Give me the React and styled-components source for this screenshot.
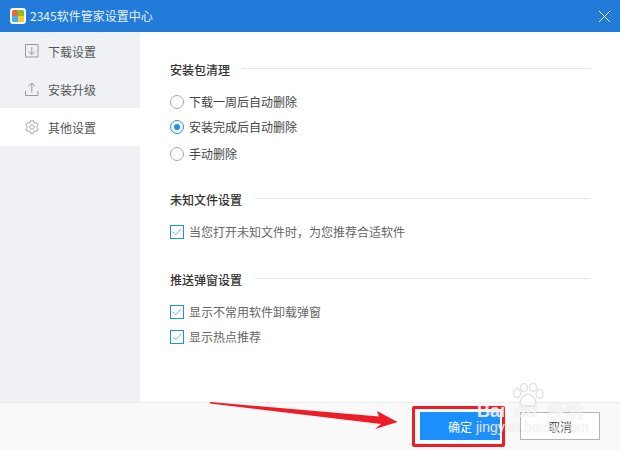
import React from "react"
import styled, { createGlobalStyle } from "styled-components"

const GlobalStyle = createGlobalStyle`
  html, body {
    margin: 0;
    padding: 0;
    background: #fff;
  }
  body {
    font-family: "Noto Sans CJK SC", "Liberation Sans", sans-serif;
    font-size: 12px;
  }
`

const Window = styled.div`
  position: relative;
  width: 620px;
  height: 450px;
  display: flex;
  flex-direction: column;
  overflow: hidden;
  background: #fff;
`

const TitleBar = styled.header`
  height: 32px;
  flex: none;
  display: flex;
  align-items: center;
  padding: 0 10px 0 10px;
  gap: 4px;
  background: #227bd8;
  color: #e6f2ff;
  font-size: 12px;
`

const Title = styled.span`
  flex: 1;
  line-height: 18px;
`

const Body = styled.div`
  flex: 1;
  display: flex;
  min-height: 0;
`

const Sidebar = styled.nav`
  width: 140px;
  flex: none;
  background: #eff1f5;
`

const NavItem = styled.div`
  height: 38px;
  display: flex;
  align-items: center;
  gap: 9px;
  padding-left: 25px;
  color: #555;
  background: ${(p) => (p.$active ? "#fff" : "transparent")};
`

const Content = styled.main`
  flex: 1;
  padding: 26px 30px 0;
`

const Section = styled.section`
  margin-bottom: ${(p) => p.$gap}px;
`

const Heading = styled.div`
  height: 20px;
  display: flex;
  align-items: center;
  gap: 12px;
  color: #333;
  font-weight: 500;
  margin-bottom: 17px;

  & > span {
    position: relative;
    top: 1px;
  }

  &::after {
    content: "";
    flex: 1;
    height: 1px;
    background: #e6e6e6;
  }
`

const Option = styled.div`
  height: ${(p) => p.$h || 25}px;
  display: flex;
  align-items: flex-start;
  gap: 5px;
  line-height: 14px;
  color: ${(p) => p.$color || "#666"};
`

const Radio = styled.span`
  box-sizing: border-box;
  width: 14px;
  height: 14px;
  flex: none;
  border-radius: 50%;
  border: 1px solid ${(p) => (p.$on ? "#1b8ffb" : "#a8a8a8")};
  display: flex;
  align-items: center;
  justify-content: center;

  &::after {
    content: "";
    display: ${(p) => (p.$on ? "block" : "none")};
    width: 6px;
    height: 6px;
    border-radius: 50%;
    background: #1b8ffb;
  }
`

const Check = styled.span`
  box-sizing: border-box;
  width: 14px;
  height: 14px;
  flex: none;
  border: 1px solid #1b8ffb;
  display: flex;
  align-items: center;
  justify-content: center;
`

const Footer = styled.footer`
  height: 48px;
  flex: none;
  box-sizing: border-box;
  border-top: 1px solid #ececec;
  background: #f9f9f9;
  display: flex;
  justify-content: flex-end;
  align-items: center;
  gap: 20px;
  padding: 0 20px 1px;
`

const Button = styled.button`
  box-sizing: border-box;
  width: 80px;
  height: 28px;
  margin: 0;
  padding: 0;
  font: inherit;
  border: 1px solid ${(p) => (p.$primary ? "#1b8ffb" : "#b4b4b4")};
  background: ${(p) => (p.$primary ? "#1b8ffb" : "#fff")};
  color: ${(p) => (p.$primary ? "#fff" : "#444")};
`

const Marker = styled.div`
  position: absolute;
  left: 412px;
  top: 406px;
  width: 93px;
  height: 41px;
  box-sizing: border-box;
  border: 3px solid #ee1c25;
  border-radius: 2px;
`

const Arrow = styled.svg`
  position: absolute;
  left: 205px;
  top: 395px;
`

const Watermark = styled.div`
  position: absolute;
  left: 476px;
  top: 380px;
  width: 144px;
  height: 58px;
  color: rgba(255, 255, 255, 0.75);
  text-shadow: 0 0 1px rgba(185, 185, 185, 0.55);
  pointer-events: none;
`

const WatermarkLatin = styled.span`
  position: absolute;
  left: ${(p) => p.$left}px;
  top: 20px;
  font: bold 18px "Liberation Sans", sans-serif;
  line-height: 22px;
  white-space: nowrap;
`

const WatermarkCn = styled.span`
  position: absolute;
  left: 71px;
  top: 19px;
  font: 18px "Noto Sans CJK SC", sans-serif;
  line-height: 22px;
  white-space: nowrap;
`

const WatermarkUrl = styled.div`
  position: absolute;
  left: 0;
  top: 39px;
  font: 14px "Liberation Sans", sans-serif;
  line-height: 16px;
  white-space: nowrap;
`

const Paw = styled.svg`
  position: absolute;
  left: 36px;
  top: 3px;
`

const Logo = () => (
  <svg width="16" height="16" viewBox="0 0 16 16">
    <rect x="0" y="0" width="16" height="16" rx="3" fill="#f4f8fc" />
    <path d="M2 3.500a1.500 1.500 0 0 1 1.500-1.500H8v6H2z" fill="#f0693a" />
    <path d="M8 2h4.500A1.500 1.500 0 0 1 14 3.500V8H8z" fill="#84c22a" />
    <path d="M2 8h6v6H3.500A1.500 1.500 0 0 1 2 12.500z" fill="#45aef2" />
    <path d="M8 8h6v4.500a1.500 1.500 0 0 1-1.500 1.500H8z" fill="#fbc52e" />
  </svg>
)

const CloseIcon = () => (
  <svg width="11" height="11" viewBox="0 0 11 11" fill="none" stroke="#fff" strokeWidth="1">
    <path d="M0 0l11 11M11 0L0 11" />
  </svg>
)

const DownloadIcon = () => (
  <svg width="14" height="14" viewBox="0 0 14 14" fill="none" stroke="#9a9a9a" strokeWidth="1">
    <path d="M0.500 0.500h12.500v12.500H0.500z" />
    <path d="M6.800 3v7.500M3.800 7.500l3 3 3-3" />
  </svg>
)

const UploadIcon = () => (
  <svg width="14" height="14" viewBox="0 0 14 14" fill="none" stroke="#9a9a9a" strokeWidth="1">
    <path d="M0.500 9v4.500h12.500V9" />
    <path d="M6.800 10.500V1M3.500 4.300l3.300-3.300 3.300 3.300" />
  </svg>
)

const GearIcon = () => (
  <svg width="14" height="14" viewBox="0 0 14 14" fill="none" stroke="#a5a5a5" strokeWidth="1">
    <path d="M5.600 0.700h2.800l.4 1.800 1.300.7 1.700-.6 1.400 2.500-1.300 1.200v1.400l1.300 1.200-1.400 2.500-1.700-.6-1.300.7-.4 1.800H5.600l-.4-1.800-1.300-.7-1.700.6-1.400-2.500 1.300-1.200V6.300L.8 5.100l1.400-2.500 1.700.6 1.300-.7z" />
    <circle cx="7" cy="7" r="2.200" />
  </svg>
)

const CheckMark = () => (
  <svg width="10" height="8" viewBox="0 0 10 8" fill="none" stroke="#6bb5f5" strokeWidth="1">
    <path d="M1 4l2.800 2.800L9 1" />
  </svg>
)

const AnnotationArrow = () => (
  <Arrow width="205" height="45">
    <path d="M5 7L174 21.500L172 16L192.500 27L170 34L176 29L5 8.500Z" fill="#ee1c25" />
  </Arrow>
)

const BaiduMark = () => (
  <Watermark>
    <Paw width="32" height="26" viewBox="0 0 32 26" fill="rgba(255,255,255,0.6)" stroke="rgba(215,215,215,0.7)" strokeWidth="1.500">
      <ellipse cx="5" cy="10" rx="3.500" ry="4.500" />
      <ellipse cx="12" cy="4.500" rx="3.500" ry="4" />
      <ellipse cx="21" cy="4.500" rx="3.500" ry="4" />
      <ellipse cx="27.500" cy="11" rx="3.500" ry="4.500" />
      <path d="M16 11c4 0 8 5 8 9 0 3-3 4-5 3-2-.5-4-.5-6 0-2 1-5 0-5-3 0-4 4-9 8-9z" />
    </Paw>
    <WatermarkLatin $left={1}>Bai</WatermarkLatin>
    <WatermarkLatin $left={39}>du</WatermarkLatin>
    <WatermarkCn>经验</WatermarkCn>
    <WatermarkUrl>jingyan.baidu.com</WatermarkUrl>
  </Watermark>
)

export default function App() {
  return (
    <>
      <GlobalStyle />
      <Window>
        <TitleBar>
          <Logo />
          <Title>2345软件管家设置中心</Title>
          <CloseIcon />
        </TitleBar>
        <Body>
          <Sidebar>
            <NavItem>
              <DownloadIcon />
              下载设置
            </NavItem>
            <NavItem>
              <UploadIcon />
              安装升级
            </NavItem>
            <NavItem $active>
              <GearIcon />
              其他设置
            </NavItem>
          </Sidebar>
          <Content>
            <Section $gap={16}>
              <Heading><span>安装包清理</span></Heading>
              <Option $color="#444">
                <Radio />
                下载一周后自动删除
              </Option>
              <Option $h={27} $color="#444">
                <Radio $on />
                安装完成后自动删除
              </Option>
              <Option $color="#444">
                <Radio />
                手动删除
              </Option>
            </Section>
            <Section $gap={18}>
              <Heading><span>未知文件设置</span></Heading>
              <Option>
                <Check>
                  <CheckMark />
                </Check>
                当您打开未知文件时，为您推荐合适软件
              </Option>
            </Section>
            <Section $gap={0}>
              <Heading><span>推送弹窗设置</span></Heading>
              <Option>
                <Check>
                  <CheckMark />
                </Check>
                显示不常用软件卸载弹窗
              </Option>
              <Option>
                <Check>
                  <CheckMark />
                </Check>
                显示热点推荐
              </Option>
            </Section>
          </Content>
        </Body>
        <Footer>
          <Button $primary>确定</Button>
          <Button>取消</Button>
        </Footer>
        <Marker />
        <AnnotationArrow />
        <BaiduMark />
      </Window>
    </>
  )
}
